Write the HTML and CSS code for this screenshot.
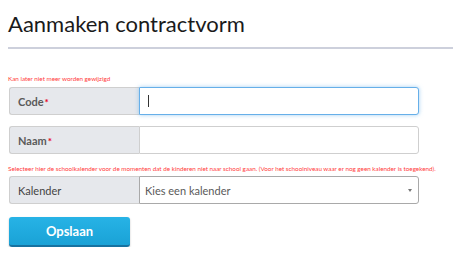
FILE: index.html
```html
<!DOCTYPE html>
<html lang="nl">
<head>
<meta charset="utf-8">
<title>Aanmaken contractvorm</title>
<link rel="stylesheet" href="styles.css">
</head>
<body>
<div class="page">
  <h1 class="title">Aanmaken contractvorm</h1>
  <hr class="rule">
  <form class="form">
    <p class="hint hint-first">Kan later niet meer worden gewijzigd</p>
    <div class="row">
      <label class="label">Code<span class="req">*</span></label>
      <div class="field focused"><span class="caret-cursor"></span></div>
    </div>
    <div class="row row-naam">
      <label class="label">Naam<span class="req">*</span></label>
      <div class="field"></div>
    </div>
    <p class="hint hint-second">Selecteer hier de schoolkalender voor de momenten dat de kinderen niet naar school gaan. (Voor het schoolniveau waar er nog geen kalender is toegekend).</p>
    <div class="row row-kal">
      <label class="label">Kalender</label>
      <div class="field select"><span class="placeholder">Kies een kalender</span><span class="arrow"></span></div>
    </div>
    <button type="button" class="btn">Opslaan</button>
  </form>
</div>
</body>
</html>
```

FILE: styles.css
```css
html, body {
  margin: 0;
  padding: 0;
  background: #fff;
}
body {
  font-family: Lato, "Open Sans", sans-serif;
  color: #333;
  overflow: hidden;
}
.page {
  padding: 9px 0 0 8px;
}
.title {
  margin: 0;
  font-weight: 400;
  font-size: 22px;
  line-height: 29px;
  color: #1a1a1a;
}
.rule {
  margin: 9px 0 0 0;
  border: 0;
  height: 2px;
  background: #cdd0dc;
}
.form {
  padding-left: 1px;
  width: 410px;
}
.hint {
  margin: 0;
  color: #ff3b3b;
  font-size: 6.3px;
  line-height: 8px;
  margin-left: -1px;
  white-space: nowrap;
}
.hint-first {
  margin-top: 26px;
  margin-bottom: 4px;
}
.hint-second {
  margin-top: 11px;
  margin-bottom: 3px;
}
.row {
  display: flex;
  height: 28px;
}
.row-naam {
  margin-top: 11px;
}
.label {
  width: 130px;
  box-sizing: border-box;
  background: #e6e8ec;
  border: 1px solid #cfcfcf;
  border-right: 0;
  border-radius: 3px 0 0 3px;
  display: flex;
  align-items: center;
  padding-left: 8px;
  font-size: 11px;
  font-weight: 700;
  color: #5a5a5a;
}
.row-kal .label {
  font-weight: 400;
  color: #444;
}
.req {
  color: #e8001c;
  font-size: 10px;
  align-self: flex-start;
  margin-top: 8px;
  margin-left: 1px;
}
.field {
  flex: 1;
  box-sizing: border-box;
  border: 1px solid #cfcfcf;
  border-radius: 0 3px 3px 0;
  background: #fff;
  display: flex;
  align-items: center;
  position: relative;
}
.field.focused {
  border-color: #66afe9;
  box-shadow: 0 0 4px rgba(102, 175, 233, 0.6);
}
.caret-cursor {
  display: block;
  width: 1px;
  height: 12px;
  margin-left: 8px;
  background: #333;
}
.select {
  border-color: #a9a9a9;
}
.placeholder {
  font-size: 11px;
  color: #5a5a5a;
  margin-left: 5px;
}
.arrow {
  position: absolute;
  right: 6px;
  top: 12px;
  width: 0;
  height: 0;
  border-left: 2.5px solid transparent;
  border-right: 2.5px solid transparent;
  border-top: 3px solid #777;
}
.btn {
  margin-top: 13px;
  width: 121px;
  height: 30px;
  border: 0;
  border-bottom: 2px solid #1672a0;
  border-radius: 3px;
  background: linear-gradient(#27b3e6, #1aa2d6);
  color: #fff;
  font-family: Lato, "Open Sans", sans-serif;
  font-size: 13px;
  font-weight: 700;
  box-shadow: 0 1px 2px rgba(0,0,0,0.25);
  padding: 0;
}
```
